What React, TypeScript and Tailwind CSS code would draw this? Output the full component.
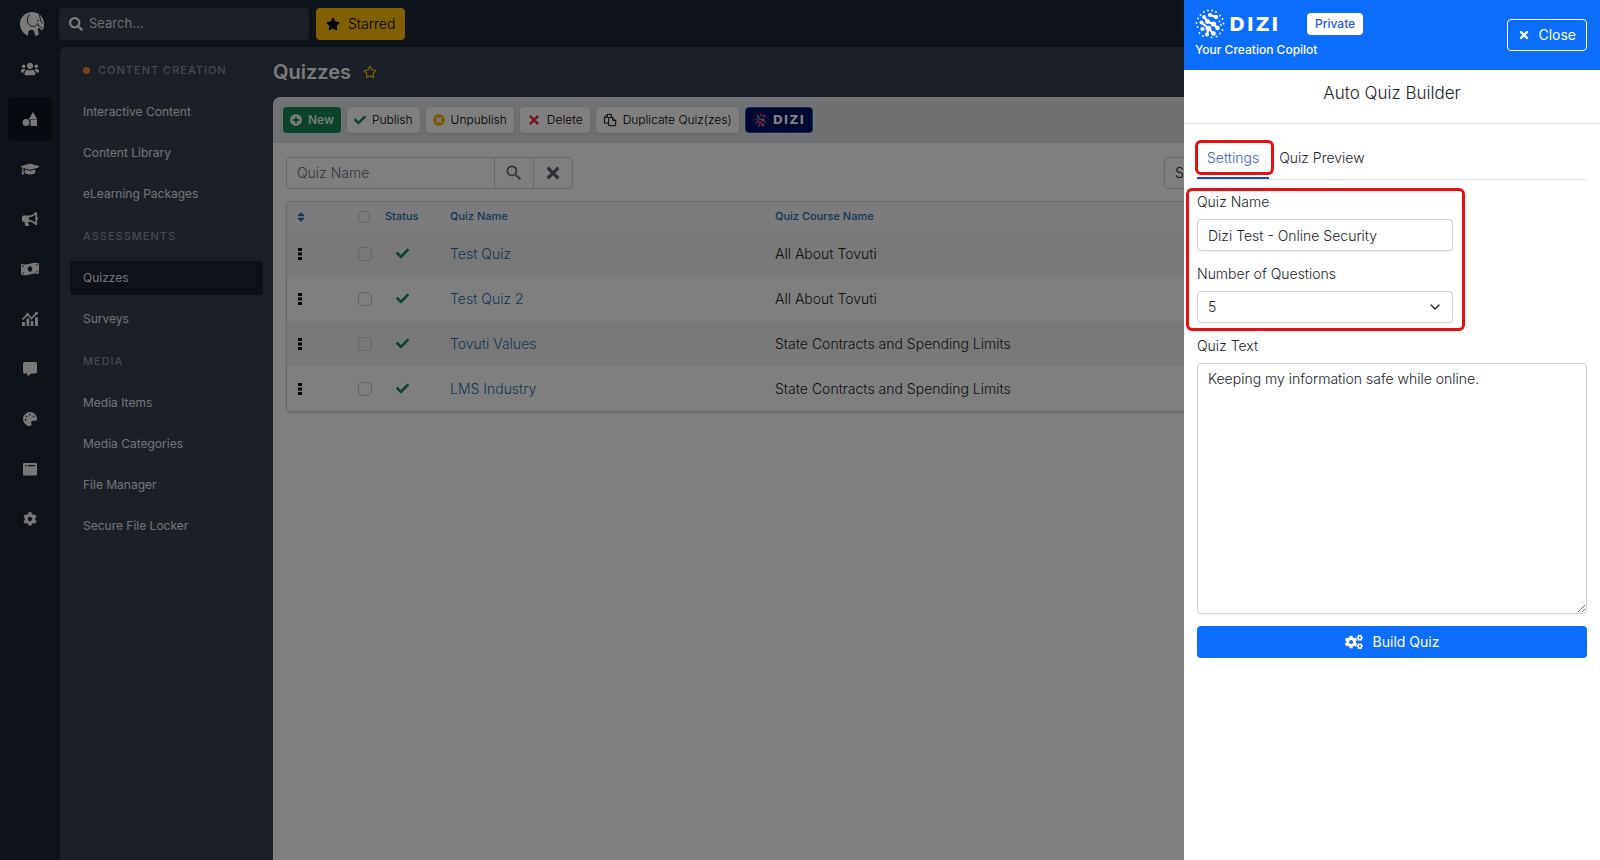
import type React from "react";
import {
  FaBullhorn,
  FaCheck,
  FaCog,
  FaCogs,
  FaCommentAlt,
  FaGraduationCap,
  FaMoneyBillWave,
  FaPalette,
  FaPlusCircle,
  FaRegStar,
  FaSearch,
  FaSort,
  FaStar,
  FaTimes,
  FaTimesCircle,
  FaUsers,
} from "react-icons/fa";
import { FiChevronDown } from "react-icons/fi";
import { MdSearch } from "react-icons/md";

interface IconProps {
  className?: string;
}

// Custom icons that the Font Awesome set does not have

const ElephantLogo = ({ className }: IconProps) => (
  <svg viewBox="0 0 24 24" className={className} aria-hidden="true">
    <path
      fill="#f4f4f4"
      d="M12 0c7 0 12 5 12 12l-.3 3.200 .3 1-2 .6 1 1.800-1.800-.6-2.400-2.400-1 1.800 1 5.200c-1.200 .8-2.400 1.200-3.600 1.400-.4-2.400-1-4.600-2-5.800-1.600-1-4-.4-4.800 1.600L8 23.500c-1.600-.5-3-1.200-4-2.300C1.500 19 0 15.500 0 12 0 5 5.500 0 12 0z"
    />
    <path
      fill="none"
      stroke="#28303a"
      strokeWidth="1"
      d="M9.500 2.500C6 6 7 12 11 14c3 1.200 6 0 6.500-2.500M17.500 11.500c.6 2 2 3.500 4.500 4M19 2.500c1.500 3 1 6 3.500 9"
    />
    <circle cx="18" cy="8.500" r=".8" fill="#28303a" />
  </svg>
);

const ShapesIcon = ({ className }: IconProps) => (
  <svg viewBox="0 0 16 16" className={className} fill="currentColor" aria-hidden="true">
    <path d="M11 1l4.500 7.500h-9z" />
    <circle cx="4" cy="11.500" r="3.500" />
    <path d="M8.500 9h6.500v6H8.500z" />
  </svg>
);

const ChartIcon = ({ className }: IconProps) => (
  <svg viewBox="0 0 16 16" className={className} fill="currentColor" aria-hidden="true">
    <path d="M0 11h3v4H0zM4.500 7.500h2.700V15H4.500zM8.700 10h2.600v5H8.700zM13 6.500h3V15h-3z" />
    <path d="M.5 8.500L5.500 3.500l4 4 5-5.500" fill="none" stroke="currentColor" strokeWidth="1.600" />
    <circle cx="5.500" cy="3.300" r="1.500" />
    <circle cx="14.500" cy="2.300" r="1.500" />
  </svg>
);

const WindowIcon = ({ className }: IconProps) => (
  <svg viewBox="0 0 16 16" className={className} aria-hidden="true">
    <rect x="1" y="2" width="14" height="12.500" rx="1" fill="currentColor" />
    <path stroke="#20262e" strokeWidth="1.300" d="M3 4.700h1.500M6 4.700h7" />
  </svg>
);

const DuplicateIcon = ({ className }: IconProps) => (
  <svg
    viewBox="0 0 16 16"
    className={className}
    fill="none"
    stroke="currentColor"
    strokeWidth="1.100"
    aria-hidden="true"
  >
    <path d="M6 11.500H1.500V5L5 1.500h4.500V5M5 1.500V5H1.500" />
    <path d="M6.500 14.500h8V8.500L11 5H6.500zM11 5v3.500h3.500" />
  </svg>
);

const GripIcon = ({ className }: IconProps) => (
  <svg viewBox="0 0 4 12" className={className} fill="currentColor" aria-hidden="true">
    <path d="M0 0h4v3H0zM0 4.500h4v3H0zM0 9h4v3H0z" />
  </svg>
);

// Blobs in the middle of the globe, joined by strokes
const globeBlobs: [number, number, number][] = [
  [9, 8, 1.9],
  [15, 6, 2],
  [21, 8, 2.2],
  [6.5, 13.5, 2],
  [12.5, 12.5, 2.4],
  [18.5, 15, 2.6],
  [7.5, 20, 2.1],
  [13.5, 19.5, 2.8],
  [22.5, 19, 2.3],
  [12, 25.5, 2],
  [18.5, 24.5, 2.3],
];

// Small dots round the rim
const globeRim: [number, number][] = [
  [9, 3],
  [13, 1.5],
  [17, 1.5],
  [21, 3],
  [25, 6.5],
  [27.5, 10],
  [24.5, 12.5],
  [28.5, 14.5],
  [26, 16],
  [27.5, 21],
  [25, 24.5],
  [21.5, 27.5],
  [16.5, 28.5],
  [8, 27],
  [4.5, 24],
  [2.5, 18],
  [1.5, 14],
  [3, 9.5],
  [5.5, 6],
];

const colourPalette = ["#f59e42", "#ef4a5f", "#d63aa0", "#7d4be0", "#3aa0f0"];

interface GlobeProps extends IconProps {
  colourful?: boolean;
}

const DiziGlobe = ({ className, colourful = false }: GlobeProps) => {
  const palette = colourful ? colourPalette : ["#ffffff"];
  return (
    <svg viewBox="0 0 30 30" className={className} aria-hidden="true">
      <path
        d="M9 8L12.500 12.500L18.500 15L22.500 19M15 6L21 8M6.500 13.500L13.500 19.500L18.500 24.500M13.500 19.500L12 25.500"
        fill="none"
        strokeWidth="2.200"
        stroke={colourful ? "#d63a78" : "#ffffff"}
      />
      {globeBlobs.map(([cx, cy, r], i) => (
        <circle key={i} cx={cx} cy={cy} r={r} fill={palette[i % palette.length]} />
      ))}
      {globeRim.map(([cx, cy], i) => (
        <circle key={i} cx={cx} cy={cy} r={0.9} fill={palette[i % palette.length]} />
      ))}
    </svg>
  );
};

const railItems: { label: string; icon: React.ReactNode; active?: boolean }[] = [
  { label: "Users", icon: <FaUsers className="h-4 w-[18px]" /> },
  { label: "Content", icon: <ShapesIcon className="size-4" />, active: true },
  { label: "Courses", icon: <FaGraduationCap className="h-4 w-[18px]" /> },
  { label: "Marketing", icon: <FaBullhorn className="size-4" /> },
  { label: "Commerce", icon: <FaMoneyBillWave className="h-4 w-[18px]" /> },
  { label: "Reports", icon: <ChartIcon className="size-4" /> },
  { label: "Messages", icon: <FaCommentAlt className="size-3.5" /> },
  { label: "Design", icon: <FaPalette className="size-3.5" /> },
  { label: "Pages", icon: <WindowIcon className="size-4" /> },
  { label: "Configuration", icon: <FaCog className="size-3.5" /> },
];

const menuSections = [
  {
    title: "Content Creation",
    dot: true,
    items: ["Interactive Content", "Content Library", "eLearning Packages"],
  },
  { title: "Assessments", dot: false, items: ["Quizzes", "Surveys"] },
  {
    title: "Media",
    dot: false,
    items: ["Media Items", "Media Categories", "File Manager", "Secure File Locker"],
  },
];

const quizzes = [
  { name: "Test Quiz", course: "All About Tovuti" },
  { name: "Test Quiz 2", course: "All About Tovuti" },
  { name: "Tovuti Values", course: "State Contracts and Spending Limits" },
  { name: "LMS Industry", course: "State Contracts and Spending Limits" },
];

const TopBar = () => (
  <header className="flex h-[47px] items-center pl-5">
    <ElephantLogo className="mr-[15px] size-6" />
    <div className="mr-[7px] flex h-8 w-[250px] items-center gap-1.5 rounded bg-[#363f4f] px-2.5 text-[#f4f4f4]">
      <FaSearch className="size-3.5 shrink-0" />
      <input
        type="text"
        aria-label="Search"
        placeholder="Search..."
        className="w-full bg-transparent text-[13px] outline-none placeholder:text-[#dddddd]"
      />
    </div>
    <button
      type="button"
      className="flex h-8 items-center gap-2 rounded bg-[#ffc107] px-2.5 text-sm font-light text-black"
    >
      <FaStar className="size-3.5" />
      Starred
    </button>
  </header>
);

const IconRail = () => (
  <nav aria-label="Main" className="flex w-[60px] shrink-0 flex-col items-center gap-1.5">
    {railItems.map((item) => (
      <a
        key={item.label}
        href="#"
        aria-label={item.label}
        className={`flex h-11 w-11 items-center justify-center rounded text-[#f0f0f0] ${
          item.active ? "bg-[#0e141d]" : ""
        }`}
      >
        {item.icon}
      </a>
    ))}
  </nav>
);

const SideMenu = () => (
  <nav aria-label="Content" className="w-[213px] shrink-0 px-2.5 pt-[7px]">
    {menuSections.map((section) => (
      <section key={section.title} className="mb-[9px]">
        <h2 className="flex h-8 items-center gap-2 px-[13px] text-[11px] font-medium tracking-[1px] text-[#8d929a] uppercase">
          {section.dot && <span className="size-[7px] rounded-full bg-[#f08030]" />}
          {section.title}
        </h2>
        <ul className="flex flex-col gap-[7px] pt-[9px]">
          {section.items.map((item) => (
            <li key={item}>
              <a
                href="#"
                className={`flex h-[34px] items-center rounded px-[13px] text-xs text-[#e2e4e8] ${
                  item === "Quizzes" ? "bg-[#1c232e]" : ""
                }`}
              >
                {item}
              </a>
            </li>
          ))}
        </ul>
      </section>
    ))}
  </nav>
);

const toolButton =
  "flex h-[26px] items-center gap-1.5 rounded bg-white px-[7px] text-xs font-light text-black shadow-sm";

const Toolbar = () => (
  <div className="flex h-[46px] items-center gap-1.5 rounded-tl-lg bg-[#dee2e6] px-2.5">
    <button
      type="button"
      className="flex h-[26px] items-center gap-1.5 rounded bg-[#198754] px-[7px] text-xs font-medium text-white"
    >
      <FaPlusCircle className="size-3" />
      New
    </button>
    <button type="button" className={toolButton}>
      <FaCheck className="size-3 text-[#198754]" />
      Publish
    </button>
    <button type="button" className={toolButton}>
      <FaTimesCircle className="size-3 text-[#ffb514]" />
      Unpublish
    </button>
    <button type="button" className={toolButton}>
      <FaTimes className="size-3.5 text-[#dc3545]" />
      Delete
    </button>
    <button type="button" className={toolButton}>
      <DuplicateIcon className="size-3.5" />
      Duplicate Quiz(zes)
    </button>
    <button
      type="button"
      className="flex h-[26px] items-center gap-1 rounded border border-[#1b57b8] bg-[#001060] px-[7px] text-white"
    >
      <DiziGlobe className="size-4" colourful />
      <span className="font-['DejaVu_Sans'] text-xs font-bold tracking-widest">DIZI</span>
    </button>
  </div>
);

const QuizFilters = () => (
  <div className="flex items-center justify-between pb-3">
    <div className="flex h-8 rounded border border-[#ced4da] text-[#5c636a]">
      <input
        type="text"
        aria-label="Quiz Name"
        placeholder="Quiz Name"
        className="w-[207px] bg-transparent px-2.5 text-sm font-light outline-none placeholder:text-[#6c757d]"
      />
      <button
        type="button"
        aria-label="Search"
        className="flex w-[39px] items-center justify-center border-l border-[#ced4da]"
      >
        <MdSearch className="size-5" />
      </button>
      <button
        type="button"
        aria-label="Clear"
        className="flex w-[39px] items-center justify-center border-l border-[#ced4da]"
      >
        <FaTimes className="size-[18px]" />
      </button>
    </div>
    <select
      aria-label="Status filter"
      className="h-8 w-[423px] appearance-none rounded border border-[#ced4da] bg-transparent px-2.5 text-sm font-light text-[#212529]"
    >
      <option>Select Status</option>
    </select>
  </div>
);

const QuizTable = () => (
  <div className="overflow-hidden rounded border border-[#ced4da] shadow-sm">
    <table className="w-full table-fixed text-left">
      <thead>
        <tr className="h-[29px] bg-[#f8f9fc] text-[11px] text-[#2a6fa8]">
          <th className="w-[71px] pl-2">
            <FaSort className="size-3" />
          </th>
          <th className="w-[27px]">
            <input
              type="checkbox"
              aria-label="Select all quizzes"
              className="block size-3 appearance-none rounded-sm border border-[#c8ccd0]"
            />
          </th>
          <th className="w-[65px] font-medium">Status</th>
          <th className="w-[325px] font-medium">Quiz Name</th>
          <th className="font-medium">Quiz Course Name</th>
        </tr>
      </thead>
      <tbody>
        {quizzes.map((quiz) => (
          <tr key={quiz.name} className="h-[45px] text-sm font-light odd:bg-[#f2f2f2]">
            <td className="pl-[11px]">
              <GripIcon className="h-3 w-1 text-black" />
            </td>
            <td>
              <input
                type="checkbox"
                aria-label={`Select ${quiz.name}`}
                className="block size-3.5 appearance-none rounded-sm border border-[#c8ccd0]"
              />
            </td>
            <td className="pl-[11px]">
              <FaCheck className="size-[13px] text-[#198754]" />
            </td>
            <td>
              <a href="#" className="text-[#2a6fa8]">
                {quiz.name}
              </a>
            </td>
            <td className="text-[#212529]">{quiz.course}</td>
          </tr>
        ))}
      </tbody>
    </table>
  </div>
);

const fieldStyle =
  "w-full rounded border border-[#ced4da] bg-white px-2.5 text-sm font-light text-[#212529] shadow-xs";

const DiziDrawer = () => (
  <aside className="fixed inset-y-0 right-0 flex w-[416px] flex-col bg-white text-[#212529]">
    <header className="flex h-[70px] items-center justify-between bg-[#0d6efd] pr-[13px] pl-[11px] text-white">
      <div>
        <div className="flex h-[30px] items-center">
          <DiziGlobe className="mr-1 size-[30px]" />
          <span className="w-[78px] font-['DejaVu_Sans'] text-[19px] leading-none font-bold tracking-widest">
            DIZI
          </span>
          <span className="rounded bg-white px-2 text-xs leading-[22px] font-medium text-[#2a55f0]">
            Private
          </span>
        </div>
        <p className="text-xs leading-[22px] font-medium">Your Creation Copilot</p>
      </div>
      <button
        type="button"
        className="flex h-8 items-center gap-2 rounded border border-white px-2.5 text-sm"
      >
        <FaTimes className="size-3" />
        Close
      </button>
    </header>

    <h2 className="border-b border-[#dee2e6] pt-[11px] pb-[17px] text-center text-[17px] leading-[25px] font-light">
      Auto Quiz Builder
    </h2>

    <div className="flex flex-col px-[13px] pt-4">
      <div role="tablist" className="flex border-b border-[#dee2e6] text-sm font-light">
        <button
          type="button"
          role="tab"
          aria-selected="true"
          className="relative h-[39px] border-b-2 border-[#1d49c0] px-2.5 pb-0.5 text-[#3d5bd9]"
        >
          Settings
          <span className="absolute top-0 -right-[5px] -left-0.5 h-[35px] rounded-md border-3 border-[#e60f14]" />
        </button>
        <button
          type="button"
          role="tab"
          aria-selected="false"
          className="h-[39px] border-b-2 border-transparent px-2.5 pb-0.5"
        >
          Quiz Preview
        </button>
      </div>

      <div className="relative w-64 pt-[11px]">
        <label htmlFor="quiz-name" className="block pb-1.5 text-sm leading-[22px] font-light">
          Quiz Name
        </label>
        <input
          id="quiz-name"
          type="text"
          defaultValue="Dizi Test - Online Security"
          className={`${fieldStyle} h-8`}
        />
        <label
          htmlFor="question-count"
          className="block pt-3 pb-1.5 text-sm leading-[22px] font-light"
        >
          Number of Questions
        </label>
        <div className="relative">
          <select
            id="question-count"
            defaultValue="5"
            className={`${fieldStyle} h-8 appearance-none`}
          >
            <option>5</option>
            <option>10</option>
          </select>
          <FiChevronDown className="pointer-events-none absolute top-2 right-2.5 size-4" />
        </div>
        <span className="pointer-events-none absolute top-2 -right-3 -bottom-2 -left-[11px] rounded-md border-3 border-[#e60f14]" />
      </div>

      <label htmlFor="quiz-text" className="pt-3 pb-1.5 text-sm leading-[22px] font-light">
        Quiz Text
      </label>
      <textarea
        id="quiz-text"
        defaultValue="Keeping my information safe while online."
        className={`${fieldStyle} mb-3 h-[251px] py-[5px]`}
      />
      <button
        type="button"
        className="flex h-8 items-center justify-center gap-2.5 rounded bg-[#0d6efd] text-sm text-white"
      >
        <FaCogs className="h-4 w-[18px]" />
        Build Quiz
      </button>
    </div>
  </aside>
);

export default function App() {
  return (
    <div className="flex min-h-screen flex-col overflow-hidden bg-[#1c2632] font-[Inter,'Liberation_Sans',sans-serif]">
      <TopBar />
      <div className="flex grow">
        <IconRail />
        <div className="flex min-w-0 grow rounded-tl-md bg-[#363f4f]">
          <SideMenu />
          <main className="flex min-w-0 grow flex-col">
            <div className="flex h-[50px] items-center gap-3">
              <h1 className="text-xl font-semibold text-[#f4f4f4]">Quizzes</h1>
              <FaRegStar className="size-3.5 text-[#ffc107]" />
            </div>
            <div className="grow rounded-tl-lg bg-white">
              <Toolbar />
              <div className="px-[13px] pt-3.5">
                <QuizFilters />
                <QuizTable />
              </div>
            </div>
          </main>
        </div>
      </div>

      {/* Backdrop behind the open drawer */}
      <div className="fixed inset-0 bg-black/50" />
      <DiziDrawer />
    </div>
  );
}
